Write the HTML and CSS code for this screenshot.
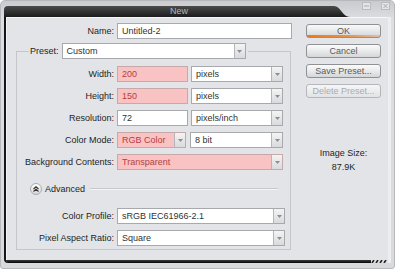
FILE: index.html
```html
<!DOCTYPE html>
<html lang="en">
<head>
    <meta charset="UTF-8">
    <title>New</title>
    <link rel="stylesheet" href="styles.css">
</head>
<body>
    <div class="window">
        <div class="titlebar">
            <div class="title">New</div>
            <svg class="title-slope" width="16" height="11" viewBox="0 0 16 11">
                <defs>
                    <linearGradient id="tb" x1="0" y1="0" x2="0" y2="1">
                        <stop offset="0" stop-color="#4a4a4a"/>
                        <stop offset="1" stop-color="#1c1c1c"/>
                    </linearGradient>
                </defs>
                <path d="M0 0 C7 0 8 11 16 11 L0 11 Z" fill="url(#tb)"/>
            </svg>
            <div class="win-btns">
                <svg width="9" height="8" viewBox="0 0 9 8"><rect x="0.5" y="0.5" width="8" height="7" fill="#e4e5e7" stroke="#b9bbbe"/><path d="M2 4h5" stroke="#a8aaad"/></svg>
                <svg width="9" height="8" viewBox="0 0 9 8"><rect x="0.5" y="0.5" width="8" height="7" fill="#e4e5e7" stroke="#b9bbbe"/><path d="M2.5 2l4 4M6.5 2l-4 4" stroke="#a8aaad"/></svg>
            </div>
        </div>

        <div class="frame">
            <div class="content">
                <div class="main">
                    <div class="row name-row">
                        <span class="lbl name-lbl">Name:</span>
                        <div class="field name-field">Untitled-2</div>
                    </div>

                    <fieldset class="group">
                        <legend class="preset">
                            <span class="preset-lbl">Preset:</span>
                            <div class="select preset-select">
                                <span class="val">Custom</span>
                                <span class="arrow"><svg width="5" height="3" viewBox="0 0 5 3"><path d="M0 0h5L2.5 3z" fill="#8c8e91"/></svg></span>
                            </div>
                        </legend>

                        <div class="row first">
                            <span class="lbl">Width:</span>
                            <div class="field pink short">200</div>
                            <div class="select unit">
                                <span class="val">pixels</span>
                                <span class="arrow"><svg width="5" height="3" viewBox="0 0 5 3"><path d="M0 0h5L2.5 3z" fill="#8c8e91"/></svg></span>
                            </div>
                        </div>
                        <div class="row">
                            <span class="lbl">Height:</span>
                            <div class="field pink short">150</div>
                            <div class="select unit">
                                <span class="val">pixels</span>
                                <span class="arrow"><svg width="5" height="3" viewBox="0 0 5 3"><path d="M0 0h5L2.5 3z" fill="#8c8e91"/></svg></span>
                            </div>
                        </div>
                        <div class="row">
                            <span class="lbl">Resolution:</span>
                            <div class="field short">72</div>
                            <div class="select unit">
                                <span class="val">pixels/inch</span>
                                <span class="arrow"><svg width="5" height="3" viewBox="0 0 5 3"><path d="M0 0h5L2.5 3z" fill="#8c8e91"/></svg></span>
                            </div>
                        </div>
                        <div class="row">
                            <span class="lbl">Color Mode:</span>
                            <div class="select pink mode">
                                <span class="val">RGB Color</span>
                                <span class="arrow"><svg width="5" height="3" viewBox="0 0 5 3"><path d="M0 0h5L2.5 3z" fill="#8c8e91"/></svg></span>
                            </div>
                            <div class="select bits">
                                <span class="val">8 bit</span>
                                <span class="arrow"><svg width="5" height="3" viewBox="0 0 5 3"><path d="M0 0h5L2.5 3z" fill="#8c8e91"/></svg></span>
                            </div>
                        </div>
                        <div class="row">
                            <span class="lbl">Background Contents:</span>
                            <div class="select pink wide">
                                <span class="val">Transparent</span>
                                <span class="arrow"><svg width="5" height="3" viewBox="0 0 5 3"><path d="M0 0h5L2.5 3z" fill="#8c8e91"/></svg></span>
                            </div>
                        </div>

                        <div class="advanced">
                            <span class="adv-btn">
                                <svg width="6" height="6" viewBox="0 0 6 6"><path d="M0.5 3L3 0.8 5.5 3M0.5 5.5L3 3.3 5.5 5.5" fill="none" stroke="#333" stroke-width="1.1"/></svg>
                            </span>
                            <span class="adv-lbl">Advanced</span>
                            <span class="adv-line"></span>
                        </div>

                        <div class="row adv-first">
                            <span class="lbl">Color Profile:</span>
                            <div class="select long">
                                <span class="val">sRGB IEC61966-2.1</span>
                                <span class="arrow"><svg width="5" height="3" viewBox="0 0 5 3"><path d="M0 0h5L2.5 3z" fill="#8c8e91"/></svg></span>
                            </div>
                        </div>
                        <div class="row">
                            <span class="lbl">Pixel Aspect Ratio:</span>
                            <div class="select long">
                                <span class="val">Square</span>
                                <span class="arrow"><svg width="5" height="3" viewBox="0 0 5 3"><path d="M0 0h5L2.5 3z" fill="#8c8e91"/></svg></span>
                            </div>
                        </div>
                    </fieldset>
                </div>

                <div class="side">
                    <button class="btn default">OK</button>
                    <button class="btn">Cancel</button>
                    <button class="btn">Save Preset...</button>
                    <button class="btn" disabled>Delete Preset...</button>
                    <div class="image-size">
                        <div>Image Size:</div>
                        <div class="size-val">87.9K</div>
                    </div>
                </div>
            </div>
            <div class="bottom-bar">
                <div class="bar"></div>
                <svg class="grip" width="17" height="3" viewBox="0 0 17 3">
                    <rect width="17" height="3" fill="#dfe1e4"/>
                    <path d="M1 3L3 0M5 3L7 0M9 3L11 0M13 3L15 0" stroke="#222" stroke-width="1.6"/>
                </svg>
            </div>
        </div>
    </div>
</body>
</html>
```

FILE: styles.css
```css
* {
    box-sizing: border-box;
}
body {
    margin: 0;
    background: #ffffff;
    font-family: "Liberation Sans", Arial, sans-serif;
    font-size: 9px;
    color: #1e1e1e;
}
.window {
    width: 395px;
    height: 269px;
    display: flex;
    flex-direction: column;
    padding: 0 3px 5px 3px;
    border: 1px solid #b6b8bb;
    border-radius: 5px 5px 3px 3px;
    background: linear-gradient(#c9cbce, #dcdee1 18px, #d8dadd);
}
.titlebar {
    height: 16px;
    display: flex;
    align-items: flex-end;
}
.title {
    width: 330px;
    height: 11px;
    padding-left: 20px;
    line-height: 11px;
    text-align: center;
    color: #b4b4b4;
    border-radius: 4px 0 0 0;
    background: linear-gradient(#4a4a4a, #1c1c1c);
}
.title-slope {
    display: block;
}
.win-btns {
    align-self: flex-start;
    display: flex;
    gap: 10px;
    margin: 1px 1px 0 auto;
}
.win-btns svg {
    display: block;
}
.frame {
    flex: 1;
    display: flex;
    flex-direction: column;
    border-left: 2px solid #161616;
    border-right: 3px solid #eceef0;
    border-bottom-left-radius: 4px;
}
.content {
    flex: 1;
    display: flex;
    padding-top: 5px;
    border-top: 1px solid #f6f7f8;
    border-left: 1px solid #f3f4f5;
    background: #e2e4e7;
}
.bottom-bar {
    height: 3px;
    display: flex;
}
.bar {
    flex: 1;
    background: linear-gradient(#3a3a3a, #050505);
    border-bottom-left-radius: 2px;
}
.grip {
    display: block;
}
.main {
    width: 286px;
}
.row {
    display: flex;
    align-items: center;
    height: 16px;
    margin-top: 6px;
}
.name-row {
    margin-top: 0;
}
.lbl {
    width: 97px;
    margin-right: 3px;
    text-align: right;
    white-space: nowrap;
}
.name-lbl {
    width: 107px;
}
.field,
.select {
    height: 16px;
    display: flex;
    align-items: center;
    border: 1px solid #a7a9ac;
    background: #ffffff;
    color: #333333;
    white-space: nowrap;
    overflow: hidden;
}
.field {
    padding-left: 4px;
}
.select .val {
    flex: 1;
    padding-left: 4px;
    overflow: hidden;
}
.select .arrow {
    width: 11px;
    height: 100%;
    display: flex;
    align-items: center;
    justify-content: center;
    border-left: 1px solid #b4b6b9;
    background: linear-gradient(#f4f4f5, #d9dadc);
}
.select .arrow svg {
    display: block;
}
.pink {
    background: #fac3c3;
    border-color: #c7a9a9;
    color: #b4403e;
}
.name-field {
    width: 175px;
}
.group {
    width: 275px;
    margin: 4px 0 0 9px;
    padding: 0 0 3px 0;
    min-width: 0;
    border: 1px solid #c4c6c9;
}
.preset {
    display: flex;
    align-items: center;
    height: 16px;
    margin-left: 12px;
    padding: 0 2px 0 1px;
}
.preset-lbl {
    margin-right: 3px;
}
.preset-select {
    width: 184px;
}
.row.first {
    margin-top: 7px;
}
.short {
    width: 71px;
}
.unit {
    width: 92px;
    margin-left: 3px;
}
.mode {
    width: 69px;
}
.bits {
    width: 93px;
    margin-left: 4px;
}
.wide {
    width: 166px;
}
.long {
    width: 168px;
}
.advanced {
    display: flex;
    align-items: center;
    height: 12px;
    margin-top: 13px;
    padding-left: 13px;
}
.adv-btn {
    width: 12px;
    height: 12px;
    display: flex;
    align-items: center;
    justify-content: center;
    border: 1px solid #a9abae;
    border-radius: 50%;
    background: linear-gradient(#fdfdfd, #d6d7d9);
}
.adv-btn svg {
    display: block;
}
.adv-lbl {
    margin-left: 3px;
}
.adv-line {
    flex: 1;
    height: 2px;
    margin: 0 12px 0 5px;
    border-top: 1px solid #c6c8cb;
    border-bottom: 1px solid #f4f5f6;
}
.row.adv-first {
    margin-top: 13px;
}
.side {
    width: 75px;
    margin-left: 13px;
    padding-top: 1px;
    display: flex;
    flex-direction: column;
}
.btn {
    height: 14px;
    margin: 0 0 6px 0;
    padding: 0;
    font-family: inherit;
    font-size: 9px;
    line-height: 12px;
    color: #5a5a5a;
    border: 1px solid #8f9194;
    border-radius: 3px;
    background: linear-gradient(#fbfbfb, #e9eaeb 50%, #d5d6d8);
}
.btn.default {
    background:
        linear-gradient(to right, #ef7a16, rgba(239, 122, 22, 0.75) 55%, rgba(239, 122, 22, 0.25)) bottom / 100% 2px no-repeat,
        linear-gradient(#f9f9f9, #e7e8e9 50%, #d3d4d6);
}
.btn:disabled {
    color: #a9abae;
    border-color: #b4b6b9;
    background: linear-gradient(#f5f6f7, #e2e3e5);
}
.image-size {
    margin-top: 44px;
    text-align: center;
    line-height: 11px;
}
.size-val {
    margin-top: 3px;
}
```
